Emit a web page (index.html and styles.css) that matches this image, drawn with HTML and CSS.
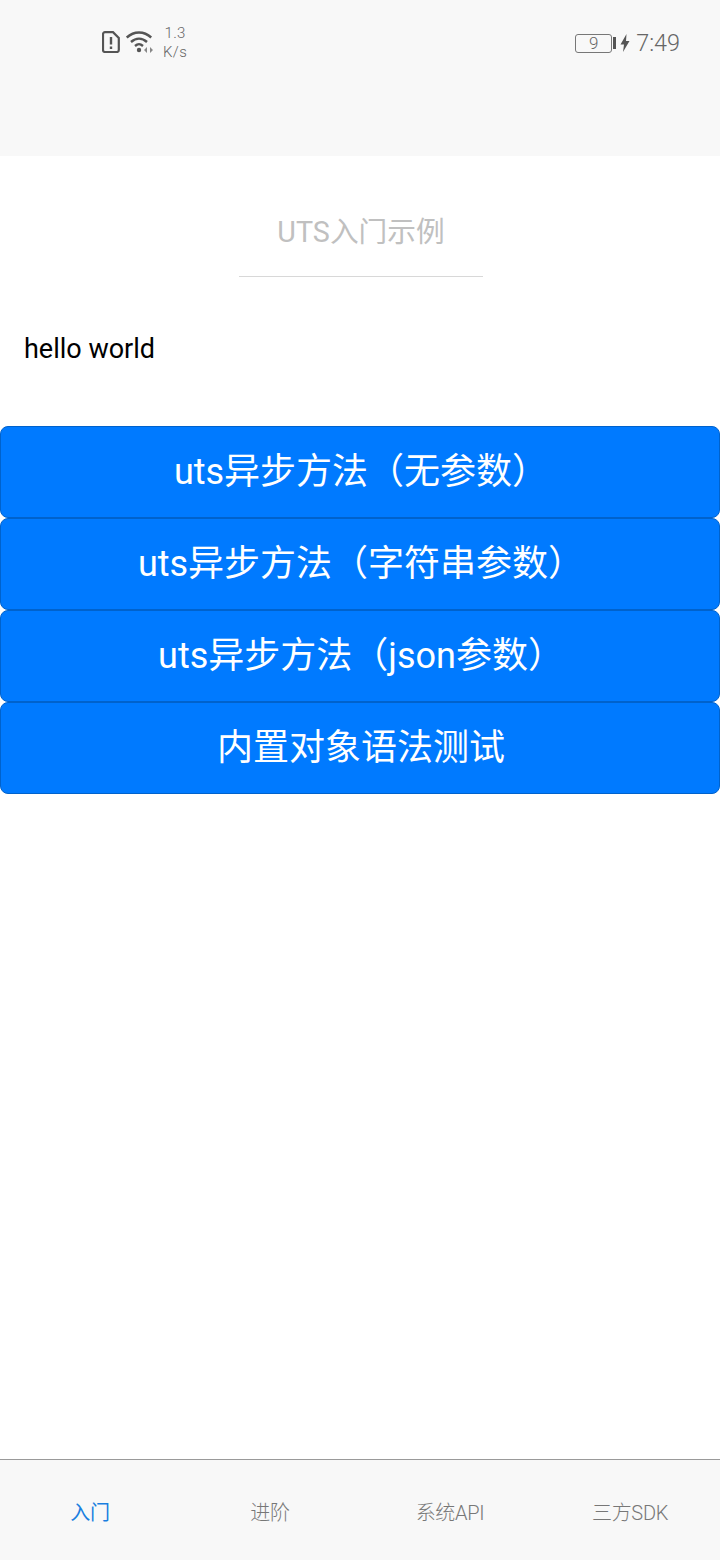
FILE: index.html
```html
<!DOCTYPE html>
<html lang="zh">
<head>
<meta charset="utf-8">
<title>UTS入门示例</title>
<link rel="stylesheet" href="styles.css">
</head>
<body>
<div class="app">
  <header class="status">
    <div class="status-left">
      <svg class="sim" width="18" height="22" viewBox="0 0 18 22"><path d="M3 1.200h8l5.800 5.800v12a2 2 0 0 1-2 2H3a2 2 0 0 1-2-2V3.200a2 2 0 0 1 2-2z" fill="none" stroke="#555" stroke-width="2.200"/><path d="M9 6v7.500M9 15.500v2.500" stroke="#555" stroke-width="2.400"/></svg>
      <svg class="wifi" width="28" height="24" viewBox="0 0 28 24"><path d="M.8 7.500C8 .8 18 .8 25.200 7.500M5 12c5-4.500 11-4.500 16 0M9 16c3-2.500 5-2.500 8 0" fill="none" stroke="#555" stroke-width="2.400"/><circle cx="13" cy="20" r="2.200" fill="#555"/><path d="M21 17v6l-3-3zM24 17v6l3-3z" fill="#888"/></svg>
      <div class="speed"><span>1.3</span><span>K/s</span></div>
    </div>
    <div class="status-right">
      <div class="battery">9</div>
      <div class="battery-cap"></div>
      <svg class="bolt" width="10" height="18" viewBox="0 0 10 18"><path d="M6.500 0 .5 10.500h3.500L3 18l6.500-11H6z" fill="#555"/></svg>
      <span class="clock">7:49</span>
    </div>
  </header>
  <main class="content">
    <div class="title-wrap"><div class="title">UTS入门示例</div></div>
    <p class="hello">hello world</p>
    <div class="buttons">
      <button class="btn">uts异步方法（无参数）</button>
      <button class="btn">uts异步方法（字符串参数）</button>
      <button class="btn">uts异步方法（json参数）</button>
      <button class="btn">内置对象语法测试</button>
    </div>
  </main>
  <nav class="tabs">
    <div class="tab tab-active">入门</div>
    <div class="tab">进阶</div>
    <div class="tab">系统API</div>
    <div class="tab">三方SDK</div>
  </nav>
</div>
</body>
</html>
```
FILE: styles.css
```css
html, body { margin: 0; padding: 0; }
body { width: 720px; height: 1560px; background: #fff; font-family: Roboto, "Noto Sans CJK SC", sans-serif; overflow: hidden; }
.app { display: flex; flex-direction: column; height: 1560px; }
.status { height: 156px; flex: none; background: #f8f8f8; display: flex; justify-content: space-between; align-items: flex-start; padding: 24px 40px 0 102px; box-sizing: border-box; }
.status-left { display: flex; align-items: center; height: 36px; }
.sim { margin-right: 6px; }
.wifi { margin-right: 9px; }
.speed { display: flex; flex-direction: column; align-items: center; font-size: 15px; line-height: 19px; color: #666; font-weight: 300; letter-spacing: .4px; padding-top: 1px; }
.status-right { display: flex; align-items: center; height: 38px; color: #666; }
.battery { width: 35px; height: 17px; border: 1px solid #777; border-radius: 3px; font-size: 17px; line-height: 17px; text-align: center; font-weight: 300; }
.battery-cap { width: 3px; height: 12px; background: #555; margin: 0 4px 0 1px; }
.bolt { margin-right: 6px; }
.clock { font-size: 23.400px; font-weight: 300; color: #666; }
.content { flex: 1; display: flex; flex-direction: column; }
.title-wrap { display: flex; justify-content: center; padding: 55px 0 0 2px; }
.title { width: 244px; height: 66px; line-height: 42px; box-sizing: border-box; border-bottom: 1px solid #d8d8d8; text-align: center; font-size: 28.700px; font-weight: 400; color: #c0c0c0; }
.hello { margin: 49px 0 0; padding-left: 24px; font-size: 27px; line-height: 46px; color: #000; }
.buttons { margin-top: 54px; display: flex; flex-direction: column; }
.btn { display: block; width: 720px; height: 92px; margin: 0; padding: 0 0 0 2px; border: 1px solid #0062cc; border-radius: 8px; background: #007aff; color: #fff; font-family: inherit; font-size: 36px; line-height: 90px; text-align: center; }
.tabs { height: 101px; flex: none; box-sizing: border-box; border-top: 1px solid #999; background: #f8f8f8; display: flex; padding-top: 33px; }
.tab { flex: 1; text-align: center; font-size: 20px; line-height: 41px; letter-spacing: -.3px; color: #777; font-weight: 300; }
.tab-active { color: #1a7fe0; font-weight: 400; }
```
